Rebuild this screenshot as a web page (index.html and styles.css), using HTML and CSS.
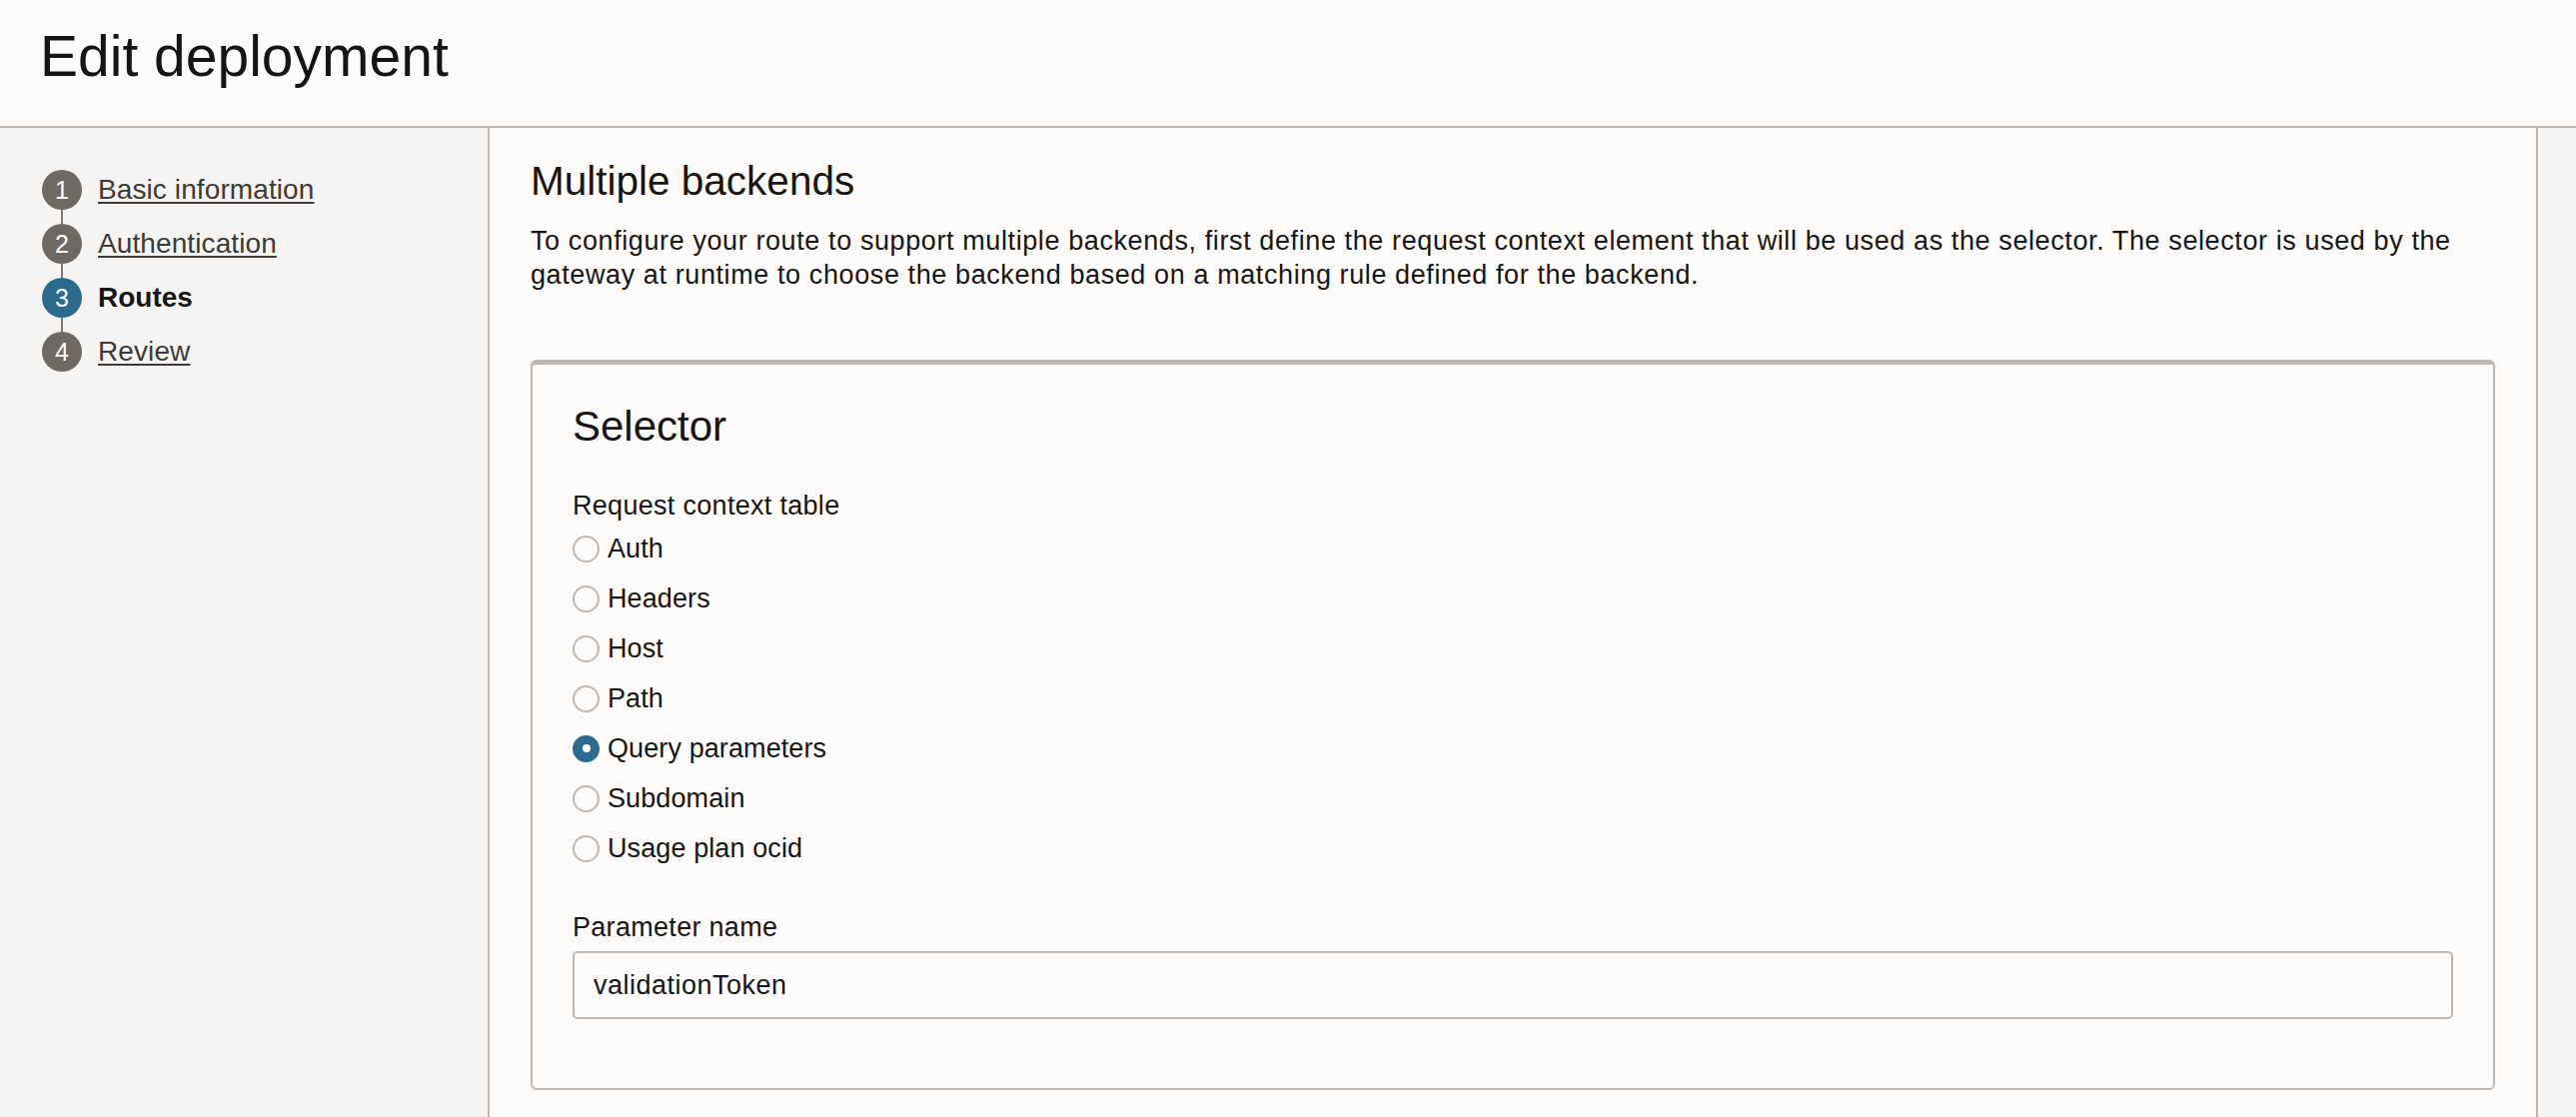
FILE: index.html
```html
<!DOCTYPE html>
<html lang="en">
<head>
<meta charset="utf-8">
<title>Edit deployment</title>
<link rel="stylesheet" href="styles.css">
</head>
<body>
<header class="page-header">
  <h1 class="page-title">Edit deployment</h1>
</header>
<div class="layout">
  <nav class="sidebar">
    <ol class="steps">
      <li class="step"><span class="step-num">1</span><a class="step-link" href="#">Basic information</a></li>
      <li class="step-connector" aria-hidden="true"></li>
      <li class="step"><span class="step-num">2</span><a class="step-link" href="#">Authentication</a></li>
      <li class="step-connector" aria-hidden="true"></li>
      <li class="step step-current"><span class="step-num">3</span><span class="step-label">Routes</span></li>
      <li class="step-connector" aria-hidden="true"></li>
      <li class="step"><span class="step-num">4</span><a class="step-link" href="#">Review</a></li>
    </ol>
  </nav>
  <main class="main">
    <h2 class="section-title">Multiple backends</h2>
    <p class="section-desc">To configure your route to support multiple backends, first define the request context element that will be used as the selector. The selector is used by the gateway at runtime to choose the backend based on a matching rule defined for the backend.</p>
    <section class="card">
      <h3 class="card-title">Selector</h3>
      <div class="field-label">Request context table</div>
      <div class="radio-group">
        <label class="radio"><input type="radio" name="ctx"><span>Auth</span></label>
        <label class="radio"><input type="radio" name="ctx"><span>Headers</span></label>
        <label class="radio"><input type="radio" name="ctx"><span>Host</span></label>
        <label class="radio"><input type="radio" name="ctx"><span>Path</span></label>
        <label class="radio"><input type="radio" name="ctx" checked><span>Query parameters</span></label>
        <label class="radio"><input type="radio" name="ctx"><span>Subdomain</span></label>
        <label class="radio"><input type="radio" name="ctx"><span>Usage plan ocid</span></label>
      </div>
      <label class="field-label field-label-spaced" for="param">Parameter name</label>
      <input class="text-input" id="param" type="text" value="validationToken">
    </section>
  </main>
  <div class="gutter"></div>
</div>
</body>
</html>
```
FILE: styles.css
```css
* { box-sizing: border-box; }
html, body {
  margin: 0;
  padding: 0;
  height: 100%;
}
body {
  font-family: "Liberation Sans", Arial, sans-serif;
  color: #161513;
  background: #f5f4f2;
  display: flex;
  flex-direction: column;
  overflow: hidden;
}
.page-header {
  height: 128px;
  background: #fcfbfa;
  border-bottom: 2px solid #bcb7b2;
  padding: 24px 40px 0;
  flex: none;
}
.page-title {
  margin: 0;
  font-size: 57px;
  font-weight: 400;
  line-height: 64px;
}
.layout {
  flex: 1;
  display: grid;
  grid-template-columns: 490px 1fr 38px;
  min-height: 0;
}
.sidebar {
  background: #f5f4f2;
  border-right: 2px solid #bcb7b2;
  padding: 42px 0 0 42px;
}
.steps {
  list-style: none;
  margin: 0;
  padding: 0;
}
.step {
  display: flex;
  align-items: center;
  height: 40px;
  gap: 16px;
}
.step-connector {
  width: 2px;
  height: 14px;
  margin-left: 19px;
  background: #807a75;
}
.step-num {
  width: 40px;
  height: 40px;
  border-radius: 50%;
  background: #6f6964;
  color: #fff;
  font-size: 25px;
  display: flex;
  align-items: center;
  justify-content: center;
  flex: none;
}
.step-current .step-num { background: #2c6a8e; }
.step-link {
  font-size: 28px;
  letter-spacing: 0.1px;
  color: #3d3a37;
  text-decoration: underline;
  text-underline-offset: 3px;
  text-decoration-thickness: 2px;
}
.step-label {
  font-size: 28px;
  font-weight: 700;
  color: #161513;
}
.main {
  background: #fcfbfa;
  border-right: 2px solid #bcb7b2;
  padding: 29px 41px 0 41px;
}
.section-title {
  margin: 0;
  font-size: 40.5px;
  font-weight: 400;
  line-height: 48px;
}
.section-desc {
  margin: 19px 0 0;
  font-size: 27px;
  letter-spacing: 0.6px;
  line-height: 34px;
}
.card {
  margin-top: 68px;
  border: 2px solid #bcb7b2;
  border-top: 5px solid #bcb7b2;
  border-radius: 6px;
  padding: 38px 40px 69px;
  background: #fcfbfa;
}
.card-title {
  margin: 0;
  font-size: 42px;
  font-weight: 400;
  line-height: 48px;
}
.field-label {
  display: block;
  margin-top: 38px;
  font-size: 27px;
  letter-spacing: 0.3px;
  line-height: 34px;
}
.field-label-spaced { margin-top: 37px; }
.radio-group {
  display: flex;
  flex-direction: column;
  margin-top: 1px;
}
.radio {
  display: flex;
  align-items: center;
  height: 50px;
  gap: 8px;
  font-size: 27px;
  letter-spacing: 0.1px;
}
.radio input {
  appearance: none;
  -webkit-appearance: none;
  margin: 0;
  width: 27px;
  height: 27px;
  border: 2px solid #bcb7b2;
  border-radius: 50%;
  background: #fcfbfa;
  display: flex;
  align-items: center;
  justify-content: center;
  flex: none;
}
.radio input:checked {
  background: #2c6a8e;
  border-color: #2c6a8e;
}
.radio input:checked::after {
  content: "";
  width: 8px;
  height: 8px;
  border-radius: 50%;
  background: #fff;
}
.text-input {
  display: block;
  width: 100%;
  height: 68px;
  margin-top: 7px;
  border: 2px solid #bcb7b2;
  border-radius: 5px;
  background: #fcfbfa;
  padding: 0 19px;
  font-family: inherit;
  font-size: 27px;
  letter-spacing: 0.5px;
  color: #161513;
  outline: none;
}
.gutter { background: #f5f4f2; }
```
